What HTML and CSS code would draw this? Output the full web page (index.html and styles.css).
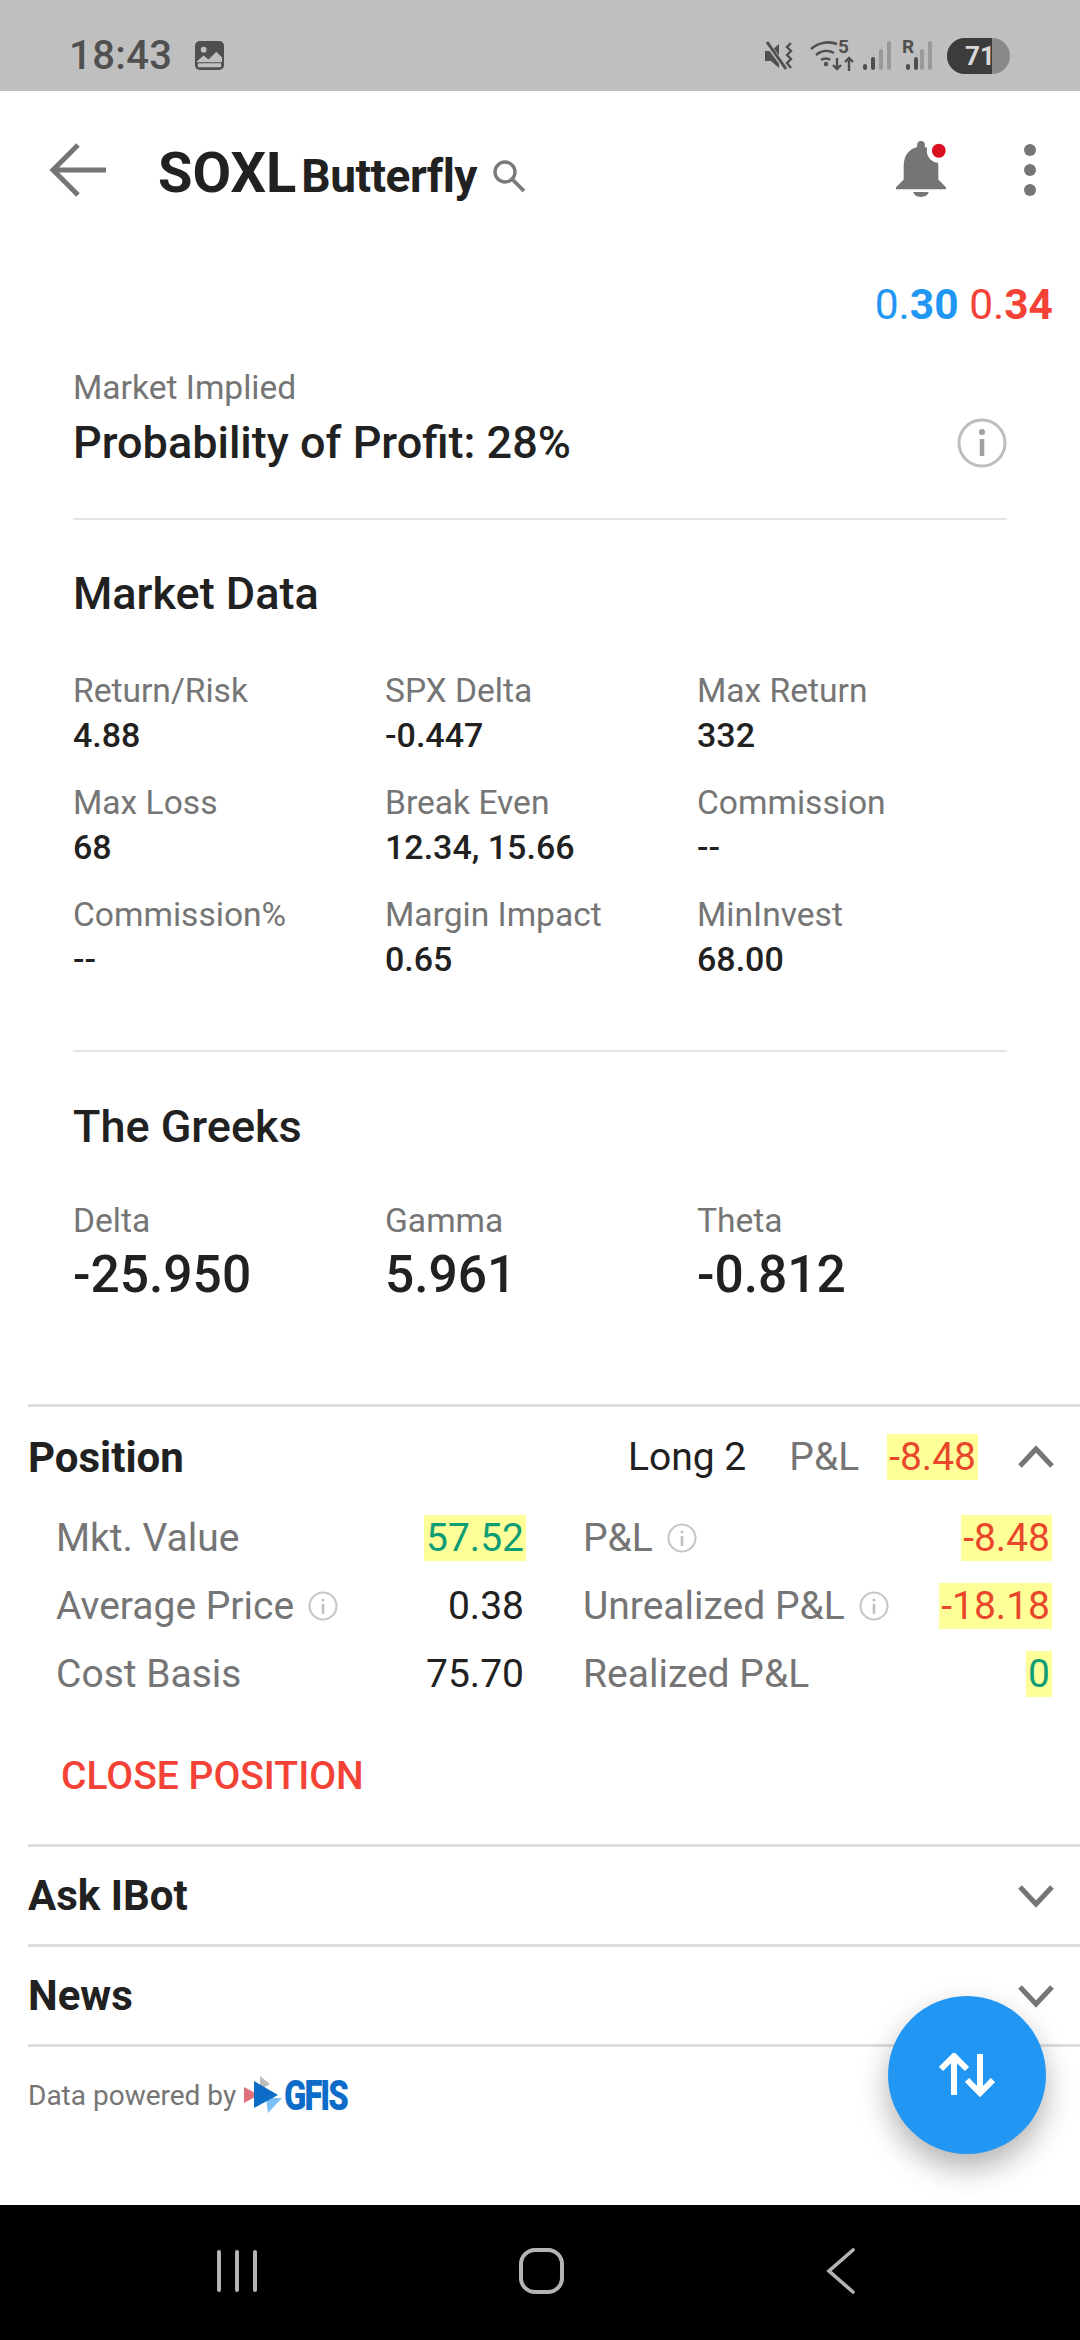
FILE: index.html
```html
<!DOCTYPE html>
<html>

<head>
    <meta charset="utf-8">
    <meta name="viewport" content="width=device-width">
    <title>SOXL Butterfly</title>
    <link rel="stylesheet" href="styles.css">
</head>

<body>
    <div class="phone">
        <div class="status">
            <span class="clock">18:43</span>
            <svg class="pic" width="31" height="31" viewBox="0 0 32 32">
                <rect x="1" y="1" width="30" height="30" rx="5" fill="#4f4f4f"/>
                <circle cx="10" cy="10" r="3" fill="#bfbfbf"/>
                <path d="M3 22l7-6 5 4 8-8 6 6v5H3z" fill="#bfbfbf"/>
                <rect x="4" y="24" width="24" height="4" rx="1" fill="#bfbfbf"/>
            </svg>
            <div class="status-right">
                <svg class="ic-mute" width="30" height="30" viewBox="0 0 30 30">
                    <path d="M1 10h6l8-7v24l-8-7H1z" fill="#4f4f4f"/>
                    <path d="M2 1l20 27" stroke="#bfbfbf" stroke-width="5"/>
                    <path d="M3 1l19 27" stroke="#4f4f4f" stroke-width="3"/>
                    <path d="M27 2l-4 4 4 4-4 4 4 4-4 4 4 5" fill="none" stroke="#4f4f4f" stroke-width="2.4"/>
                </svg>
                <svg class="ic-wifi" width="44" height="40" viewBox="0 -4 44 40">
                    <path d="M1 9c8-7 18-8 26-5M6 15c6-5 13-5 18-2M11 20c3-2 7-2 9 0" fill="none" stroke="#4f4f4f" stroke-width="2.6"/>
                    <circle cx="16" cy="24" r="2.2" fill="#4f4f4f"/>
                    <text x="28" y="13" class="net">5</text>
                    <path d="M27 18v11M23 25l4 4 4-4M39 31V19M35 22l4-4 4 4" fill="none" stroke="#4f4f4f" stroke-width="2.4"/>
                </svg>
                <svg class="ic-sig" width="28" height="30" viewBox="0 0 28 30">
                    <rect x="0" y="23" width="4" height="6" rx="2" fill="#4f4f4f"/>
                    <rect x="8" y="16" width="4" height="13" rx="2" fill="#4f4f4f"/>
                    <rect x="16" y="8" width="4" height="21" rx="2" fill="#999"/>
                    <rect x="24" y="0" width="4" height="29" rx="2" fill="#999"/>
                </svg>
                <svg class="ic-roam" width="30" height="42" viewBox="0 -6 30 42">
                    <text x="0" y="12" class="net">R</text>
                    <rect x="4" y="23" width="4" height="6" rx="2" fill="#4f4f4f"/>
                    <rect x="12" y="16" width="4" height="13" rx="2" fill="#4f4f4f"/>
                    <rect x="18" y="8" width="4" height="21" rx="2" fill="#999"/>
                    <rect x="26" y="0" width="4" height="29" rx="2" fill="#999"/>
                </svg>
                <div class="battery"><span class="battery-level">71</span></div>
            </div>
        </div>

        <div class="main">
            <div class="header">
                <svg class="back" width="60" height="56" viewBox="0 0 60 56">
                    <path d="M57 28H4M29 3L4 28l25 25" fill="none" stroke="#757575" stroke-width="5"/>
                </svg>
                <div class="title">
                    <span class="symbol">SOXL</span>
                    <span class="strategy">Butterfly</span>
                </div>
                <svg class="search" width="34" height="34" viewBox="0 0 34 34">
                    <circle cx="13" cy="13" r="10" fill="none" stroke="#7a7a7a" stroke-width="3.4"/>
                    <path d="M20 20l12 12" stroke="#7a7a7a" stroke-width="3.8"/>
                </svg>
                <div class="spacer"></div>
                <svg class="bell" width="50" height="56" viewBox="2 0 52 58">
                    <path d="M2 48l8-8V26C10 14 16 8 24 6V4a4 4 0 0 1 8 0v2c8 2 14 8 14 20v14l8 8v2H2z" fill="#757575"/>
                    <path d="M20 53h16c-1 4-4 5-8 5s-7-1-8-5z" fill="#757575"/>
                    <circle cx="46.5" cy="10" r="12.5" fill="#fff"/>
                    <circle cx="46.5" cy="10" r="7.2" fill="#d81020"/>
                </svg>
                <div class="more"><i></i><i></i><i></i></div>
            </div>

            <div class="quote">
                <span class="bid">0.<b>30</b></span>
                <span class="ask">0.<b>34</b></span>
            </div>

            <div class="block prob">
                <div class="label">Market Implied</div>
                <div class="prob-row">
                    <span class="prob-value">Probability of Profit: 28%</span>
                    <svg width="50" height="50" viewBox="0 0 50 50">
                        <circle cx="25" cy="25" r="23" fill="none" stroke="#bdbdbd" stroke-width="3"/>
                        <circle cx="25" cy="14" r="3" fill="#a0a0a0"/>
                        <path d="M25 21v17" stroke="#a0a0a0" stroke-width="4.5"/>
                    </svg>
                </div>
            </div>

            <div class="block market">
                <h2>Market Data</h2>
                <div class="stats">
                    <div class="stat"><div class="label">Return/Risk</div><div class="val">4.88</div></div>
                    <div class="stat"><div class="label">SPX Delta</div><div class="val">-0.447</div></div>
                    <div class="stat"><div class="label">Max Return</div><div class="val">332</div></div>
                    <div class="stat"><div class="label">Max Loss</div><div class="val">68</div></div>
                    <div class="stat"><div class="label">Break Even</div><div class="val">12.34, 15.66</div></div>
                    <div class="stat"><div class="label">Commission</div><div class="val">--</div></div>
                    <div class="stat"><div class="label">Commission%</div><div class="val">--</div></div>
                    <div class="stat"><div class="label">Margin Impact</div><div class="val">0.65</div></div>
                    <div class="stat"><div class="label">MinInvest</div><div class="val">68.00</div></div>
                </div>
            </div>

            <div class="greeks">
                <h2>The Greeks</h2>
                <div class="stats">
                    <div class="stat"><div class="label">Delta</div><div class="big">-25.950</div></div>
                    <div class="stat"><div class="label">Gamma</div><div class="big">5.961</div></div>
                    <div class="stat"><div class="label">Theta</div><div class="big">-0.812</div></div>
                </div>
            </div>

            <div class="position">
                <div class="section-head pos-head">
                    <span class="section-name">Position</span>
                    <div class="spacer"></div>
                    <span class="long">Long 2</span>
                    <span class="pl-label">P&amp;L</span>
                    <span class="hl red">-8.48</span>
                    <svg class="chev" width="36" height="24" viewBox="0 0 36 24">
                        <path d="M2 21L18 4l16 17" fill="none" stroke="#757575" stroke-width="5"/>
                    </svg>
                </div>
                <div class="pos-grid">
                    <div class="pos-row"><span class="pos-label">Mkt. Value</span><span class="hl green">57.52</span></div>
                    <div class="pos-row">
                        <span class="pos-label">P&amp;L<svg class="tip" viewBox="0 0 30 30"><use href="#tip"/></svg></span>
                        <span class="hl red">-8.48</span>
                    </div>
                    <div class="pos-row">
                        <span class="pos-label">Average Price<svg class="tip" viewBox="0 0 30 30"><use href="#tip"/></svg></span>
                        <span class="plain">0.38</span>
                    </div>
                    <div class="pos-row">
                        <span class="pos-label">Unrealized P&amp;L<svg class="tip" viewBox="0 0 30 30"><use href="#tip"/></svg></span>
                        <span class="hl red">-18.18</span>
                    </div>
                    <div class="pos-row"><span class="pos-label">Cost Basis</span><span class="plain">75.70</span></div>
                    <div class="pos-row"><span class="pos-label">Realized P&amp;L</span><span class="hl green">0</span></div>
                </div>
                <div class="close-pos">CLOSE POSITION</div>
            </div>

            <div class="section-head fold">
                <span class="section-name">Ask IBot</span>
                <svg class="chev" width="36" height="24" viewBox="0 0 36 24">
                    <path d="M2 3l16 17L34 3" fill="none" stroke="#757575" stroke-width="5"/>
                </svg>
            </div>
            <div class="section-head fold">
                <span class="section-name">News</span>
                <svg class="chev" width="36" height="24" viewBox="0 0 36 24">
                    <path d="M2 3l16 17L34 3" fill="none" stroke="#757575" stroke-width="5"/>
                </svg>
            </div>

            <div class="powered">
                <div class="powered-inner">
                    <span>Data powered by</span>
                    <svg class="gfis-mark" width="38" height="38" viewBox="0 0 38 38">
                        <path d="M16 0l10 8-10 6z" fill="#bdbdbd"/>
                        <path d="M0 11l15 8-15 8z" fill="#e0707a"/>
                        <path d="M22 22l16 0-14 15z" fill="#7cc0f5"/>
                        <path d="M10 5l24 14-24 13z" fill="#0c6cc8"/>
                    </svg>
                    <span class="gfis">GFIS</span>
                </div>
            </div>

            <div class="fab">
                <svg width="56" height="44" viewBox="0 0 56 44">
                    <path d="M15 42V3M2 16L15 3l13 13M41 1v39M28 27l13 13 13-13" fill="none" stroke="#fff" stroke-width="6"/>
                </svg>
            </div>
        </div>

        <div class="navbar">
            <div class="recent"><i></i><i></i><i></i></div>
            <div class="home"></div>
            <svg width="30" height="46" viewBox="0 0 30 46">
                <path d="M27 2L3 23l24 21" fill="none" stroke="#b4b4b4" stroke-width="3.6" stroke-linecap="round"/>
            </svg>
        </div>
    </div>

    <svg class="defs" width="0" height="0">
        <symbol id="tip" viewBox="0 0 30 30">
            <circle cx="15" cy="15" r="13.5" fill="none" stroke="#c8c8c8" stroke-width="2.2"/>
            <circle cx="15" cy="9" r="1.5" fill="#c0c0c0"/>
            <path d="M15 13v10" stroke="#c0c0c0" stroke-width="2.6"/>
        </symbol>
    </svg>
</body>

</html>
```

FILE: styles.css
```css
* {
    box-sizing: border-box;
}

body {
    margin: 0;
    font-family: Roboto, "Noto Sans", sans-serif;
    color: #212121;
    background: #fff;
}

.phone {
    display: flex;
    flex-direction: column;
    width: 1080px;
    height: 2340px;
    overflow: hidden;
}

.defs {
    position: absolute;
}

/* status bar */
.status {
    display: flex;
    align-items: center;
    flex: 0 0 91px;
    padding: 20px 70px 0 69px;
    background: #bfbfbf;
}

.clock {
    font-size: 40px;
    font-weight: 500;
    letter-spacing: .4px;
    color: #505050;
}

.pic {
    margin-left: 22px;
}

.status-right {
    display: flex;
    align-items: center;
    margin-left: auto;
}

.ic-wifi {
    margin-left: 16px;
}

.ic-sig {
    margin-left: 9px;
}

.ic-roam {
    margin-left: 11px;
}

.net {
    font: 700 19px Roboto, sans-serif;
    fill: #4f4f4f;
}

.battery {
    width: 63px;
    height: 36px;
    margin-left: 15px;
    border-radius: 18px;
    background: #888;
    overflow: hidden;
}

.battery-level {
    display: block;
    width: 45px;
    height: 36px;
    padding-left: 18px;
    background: #3c3c3c;
    color: #d8d8d8;
    font-size: 26px;
    font-weight: 700;
    line-height: 36px;
}

/* page */
.main {
    position: relative;
    flex: 1;
    min-height: 0;
}

.header {
    display: flex;
    align-items: center;
    height: 158px;
    padding: 0 44px 0 49px;
}

.title {
    margin-left: 49px;
    padding-top: 6px;
    white-space: nowrap;
}

.symbol {
    font-size: 56px;
    font-weight: 700;
}

.strategy {
    margin-left: 1px;
    font-size: 46px;
    font-weight: 700;
    letter-spacing: -.5px;
}

.search {
    margin-left: 15px;
    margin-top: 11px;
}

.spacer {
    flex: 1;
}

.bell {
    margin-right: 78px;
    margin-top: -2px;
}

.more i {
    display: block;
    width: 12px;
    height: 12px;
    margin: 8px 0;
    border-radius: 50%;
    background: #757575;
}

.quote {
    height: 117px;
    padding: 32px 27px 0 0;
    text-align: right;
    font-size: 42.5px;
    line-height: 48px;
}

.bid {
    color: #2196f3;
}

.ask {
    color: #f44336;
}

.quote b {
    font-weight: 700;
}

.block {
    margin: 0 73px;
    border-bottom: 2px solid #e4e4e4;
}

.label {
    font-size: 33.6px;
    line-height: 44px;
    color: #757575;
}

.prob {
    height: 154px;
}

.prob-row {
    display: flex;
    align-items: center;
    justify-content: space-between;
    margin-top: 6px;
}

.prob-value {
    font-size: 45px;
    font-weight: 500;
}

h2 {
    margin: 0;
    font-size: 45px;
    font-weight: 500;
    line-height: 50px;
}

.market {
    height: 532px;
    padding-top: 49px;
}

.stats {
    display: grid;
    grid-template-columns: 312px 312px 1fr;
    row-gap: 24px;
    margin-top: 50px;
}

.val {
    font-size: 34px;
    font-weight: 500;
    line-height: 44px;
}

.greeks {
    height: 352px;
    margin: 0 73px;
    padding-top: 50px;
}

.greeks .stats {
    margin-top: 47px;
}

.big {
    font-size: 51.5px;
    font-weight: 500;
    line-height: 64px;
}

/* collapsible sections */
.position {
    margin-left: 28px;
    border-top: 3px solid #dedede;
}

.section-head {
    display: flex;
    align-items: center;
    padding-right: 26px;
}

.section-name {
    font-size: 42px;
    font-weight: 700;
}

.pos-head {
    height: 100px;
}

.long {
    font-size: 39px;
}

.pl-label {
    margin-left: 43px;
    font-size: 39px;
    color: #757575;
}

.pos-head .hl {
    margin-left: 28px;
}

.pos-head .chev {
    margin-left: 40px;
}

.hl {
    padding: 0 2px;
    background: #ffff99;
    font-size: 39px;
    line-height: 46px;
}

.red {
    color: #e8472b;
}

.green {
    color: #0f9d75;
}

.plain {
    padding: 0 2px;
    font-size: 39px;
    line-height: 46px;
}

.pos-grid {
    display: grid;
    grid-template-columns: 470px 469px;
    column-gap: 57px;
    row-gap: 22px;
    margin-left: 28px;
    padding-top: 8px;
}

.pos-row {
    display: flex;
    align-items: center;
    justify-content: space-between;
    height: 46px;
}

.pos-label {
    display: flex;
    align-items: center;
    font-size: 39px;
    color: #757575;
}

.tip {
    width: 30px;
    height: 30px;
    margin-left: 14px;
}

.close-pos {
    height: 147px;
    padding: 56px 0 0 33px;
    font-size: 39px;
    font-weight: 500;
    line-height: 46px;
    color: #f44336;
}

.fold {
    justify-content: space-between;
    margin-left: 28px;
    height: 100px;
    border-top: 3px solid #dedede;
}

.powered {
    margin-left: 28px;
    height: 160px;
    border-top: 3px solid #dedede;
}

.powered-inner {
    display: flex;
    align-items: center;
    height: 48px;
    margin-top: 24px;
    font-size: 28px;
    color: #757575;
}

.gfis-mark {
    margin-left: 8px;
}

.gfis {
    margin-left: 2px;
    font-size: 42px;
    font-weight: 900;
    letter-spacing: -2.5px;
    color: #0c6cc8;
    transform: scaleX(.78);
    transform-origin: left center;
}

.fab {
    position: absolute;
    left: 888px;
    top: 1905px;
    display: flex;
    align-items: center;
    justify-content: center;
    width: 158px;
    height: 158px;
    border-radius: 50%;
    background: #2196f3;
    box-shadow: 0 14px 30px rgba(0, 0, 0, .3);
}

/* system navigation */
.navbar {
    display: flex;
    align-items: center;
    justify-content: space-between;
    flex: 0 0 135px;
    padding: 0 224px 4px 217px;
    background: #000;
}

.recent {
    display: flex;
    gap: 14px;
}

.recent i {
    width: 4px;
    height: 42px;
    border-radius: 2px;
    background: #b4b4b4;
}

.home {
    width: 45px;
    height: 46px;
    border: 4px solid #b4b4b4;
    border-radius: 16px;
}
```
